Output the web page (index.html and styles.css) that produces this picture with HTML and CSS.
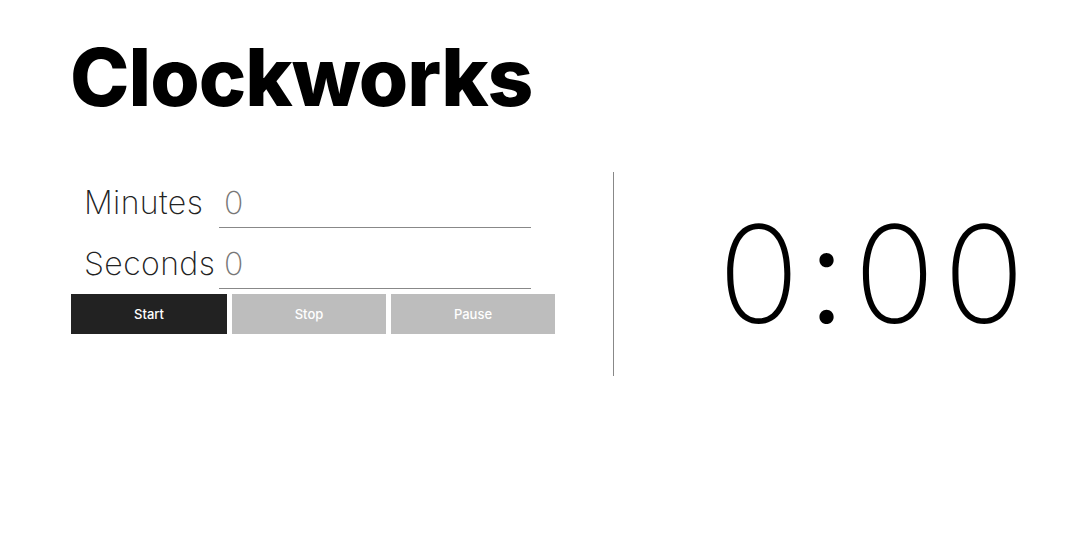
FILE: index.html
```html
<!DOCTYPE html>
<html lang="en">
<head>
<meta charset="utf-8">
<title>Clockworks</title>
<link rel="stylesheet" href="styles.css">
</head>
<body>
<div class="app">
  <h1 class="title">Clockworks</h1>
  <main class="main">
    <section class="controls">
      <div class="field">
        <label class="field-label" for="minutes">Minutes</label>
        <input class="field-input" id="minutes" type="text" placeholder="0">
      </div>
      <div class="field">
        <label class="field-label" for="seconds">Seconds</label>
        <input class="field-input" id="seconds" type="text" placeholder="0">
      </div>
      <div class="buttons">
        <button class="btn btn-start">Start</button>
        <button class="btn btn-stop">Stop</button>
        <button class="btn btn-pause">Pause</button>
      </div>
    </section>
    <section class="display">
      <div class="clock">0<span class="colon">:</span>00</div>
    </section>
  </main>
</div>
</body>
</html>
```
FILE: styles.css
```css
* { box-sizing: border-box; }
body {
  margin: 0;
  background: #fff;
  font-family: "Inter", "Noto Sans", sans-serif;
  color: #111;
}
.app {
  padding: 37px 0 0 70px;
}
.title {
  margin: 0 0 50px;
  font-size: 80px;
  line-height: 80px;
  font-weight: 800;
  letter-spacing: -1px;
  color: #000;
}
.main {
  display: flex;
  align-items: flex-start;
}
.controls {
  width: 485px;
  margin-right: 58px;
  padding-left: 1px;
}
.field {
  display: flex;
  align-items: flex-end;
  height: 61px;
}
.field-label {
  width: 148px;
  padding-left: 13px;
  font-size: 32px;
  font-weight: 200;
  line-height: 50px;
  letter-spacing: 0.4px;
  color: #222;
}
.field-input {
  width: 312px;
  height: 51px;
  border: 0;
  border-bottom: 1px solid #888;
  padding: 0 0 0 5px;
  font-family: inherit;
  font-size: 32px;
  font-weight: 200;
  line-height: 50px;
  outline: none;
  background: transparent;
}
.field-input::placeholder { color: #777; }
.buttons {
  display: flex;
  gap: 5px;
  margin-top: 5px;
}
.btn {
  height: 40px;
  border: 0;
  font-family: inherit;
  font-size: 13px;
  font-weight: 500;
  color: #fff;
  background: #bdbdbd;
  padding: 0;
}
.btn-start { width: 156px; background: #222; }
.btn-stop { width: 154px; }
.btn-pause { width: 164px; }
.display {
  margin-top: 5px;
  height: 204px;
  border-left: 1px solid #888;
  display: flex;
  align-items: center;
  padding-left: 104px;
}
.clock {
  font-size: 135px;
  font-weight: 250;
  letter-spacing: 8px;
  line-height: 1;
  color: #000;
}
.colon { font-weight: 300; }
```
